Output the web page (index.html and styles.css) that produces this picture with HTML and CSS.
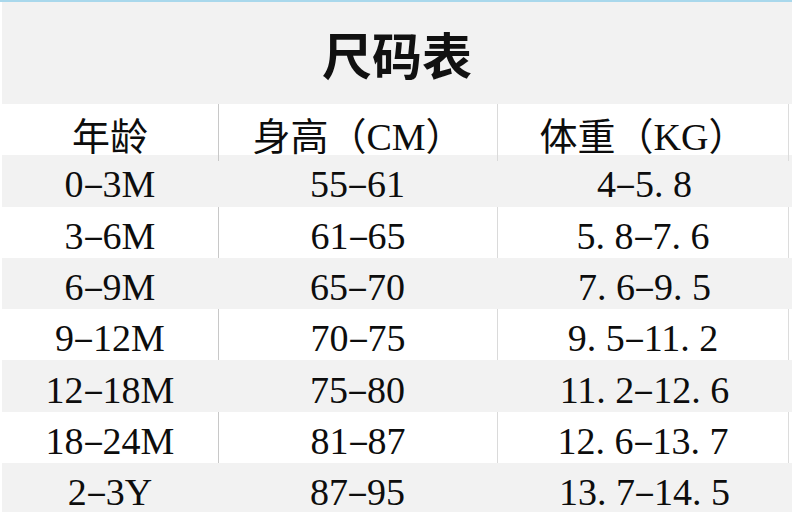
FILE: index.html
```html
<!DOCTYPE html>
<html lang="zh-CN">
<head>
<meta charset="utf-8">
<title>尺码表</title>
<link rel="stylesheet" href="styles.css">
</head>
<body>
<div class="topline"></div>
<div class="sheet">
  <div class="title">尺码表</div>
  <div class="row plain head"><div class="c c1">年龄</div><div class="c c2">身高（CM）</div><div class="c c3">体重（KG）</div></div>
  <div class="row alt"><div class="c c1">0<span class="dash">-</span>3M</div><div class="c c2">55<span class="dash">-</span>61</div><div class="c c3">4<span class="dash">-</span>5<span class="dot">.</span>8</div></div>
  <div class="row plain"><div class="c c1">3<span class="dash">-</span>6M</div><div class="c c2">61<span class="dash">-</span>65</div><div class="c c3">5<span class="dot">.</span>8<span class="dash">-</span>7<span class="dot">.</span>6</div></div>
  <div class="row alt"><div class="c c1">6<span class="dash">-</span>9M</div><div class="c c2">65<span class="dash">-</span>70</div><div class="c c3">7<span class="dot">.</span>6<span class="dash">-</span>9<span class="dot">.</span>5</div></div>
  <div class="row plain"><div class="c c1">9<span class="dash">-</span>12M</div><div class="c c2">70<span class="dash">-</span>75</div><div class="c c3">9<span class="dot">.</span>5<span class="dash">-</span>11<span class="dot">.</span>2</div></div>
  <div class="row alt"><div class="c c1">12<span class="dash">-</span>18M</div><div class="c c2">75<span class="dash">-</span>80</div><div class="c c3">11<span class="dot">.</span>2<span class="dash">-</span>12<span class="dot">.</span>6</div></div>
  <div class="row plain"><div class="c c1">18<span class="dash">-</span>24M</div><div class="c c2">81<span class="dash">-</span>87</div><div class="c c3">12<span class="dot">.</span>6<span class="dash">-</span>13<span class="dot">.</span>7</div></div>
  <div class="row alt"><div class="c c1">2<span class="dash">-</span>3Y</div><div class="c c2">87<span class="dash">-</span>95</div><div class="c c3">13<span class="dot">.</span>7<span class="dash">-</span>14<span class="dot">.</span>5</div></div>
</div>
</body>
</html>
```
FILE: styles.css
```css
html, body {
  margin: 0;
  padding: 0;
  background: #ffffff;
}
body {
  width: 792px;
  height: 512px;
  overflow: hidden;
  font-family: "Liberation Serif", "Noto Sans CJK SC", serif;
  color: #0d0d0d;
}
.topline {
  height: 2px;
  background: #a9d8ec;
}
.sheet {
  padding-left: 2px;
}
.title {
  height: 102px;
  background: #f2f2f2;
  display: flex;
  align-items: center;
  justify-content: center;
  font-family: "Noto Sans CJK SC", sans-serif;
  font-size: 50px;
  font-weight: 600;
  color: #111111;
}
.row {
  display: grid;
  grid-template-columns: 216px 279px 1fr;
  height: 51.3px;
  font-size: 38px;
}
.row.alt {
  background: #f2f2f2;
}
.row.plain {
  background: #ffffff;
  padding-right: 3px;
}
.c {
  display: flex;
  align-items: center;
  justify-content: center;
  padding-top: 7px;
  box-sizing: border-box;
  white-space: nowrap;
}
.head .c {
  font-family: "Liberation Serif", "Noto Sans CJK SC", serif;
  font-weight: 400;
  padding-top: 2px;
}
.plain .c2 {
  border-left: 1px solid #c8c8c8;
}
.plain .c3 {
  border-left: 1px solid #dadada;
  border-right: 1px solid #dcdcdc;
}
.dot {
  display: inline-block;
  width: 0.5em;
  text-align: left;
}
.dash {
  display: inline-block;
  width: 0.5em;
  text-align: center;
  transform: scale(1.7, 0.75);
}
```
